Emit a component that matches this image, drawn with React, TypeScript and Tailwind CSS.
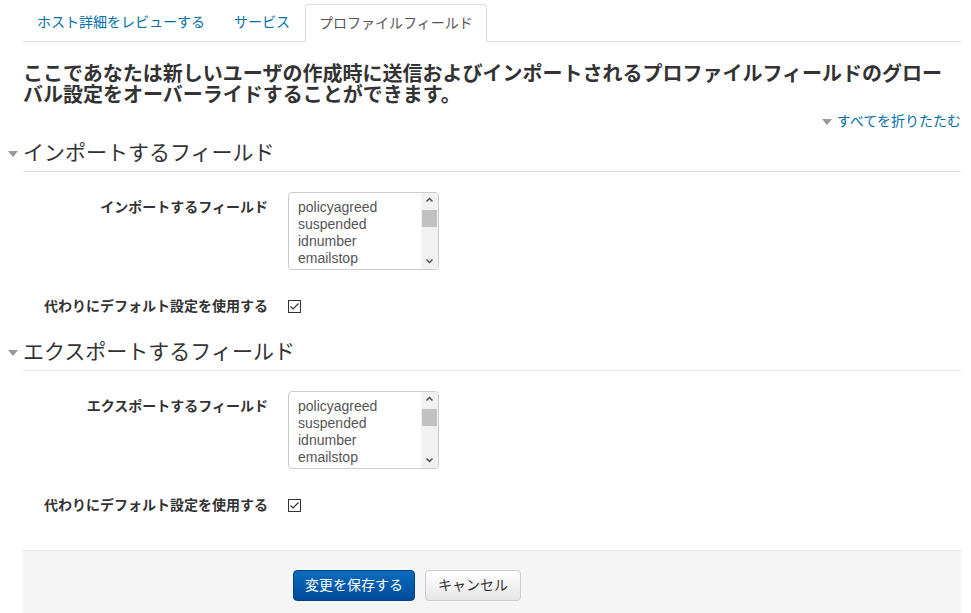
import React from 'react';

const JP = "font-['Liberation_Sans','Noto_Sans_CJK_JP',sans-serif]";

const options = ['policyagreed', 'suspended', 'idnumber', 'emailstop'];

function Triangle({ className = '' }: { className?: string }) {
  return (
    <svg width="10" height="6" viewBox="0 0 10 6" className={className}>
      <path d="M0 0 H10 L5 6 Z" fill="#999" />
    </svg>
  );
}

function FieldSelect() {
  return (
    <div className="w-[151px] h-[78px] border border-[#ccc] rounded-[4px] bg-white flex overflow-hidden">
      <ul className="flex-1 pt-[6px] pl-[9px] text-[14px] leading-[17px] text-[#555] font-['Liberation_Sans',sans-serif]">
        {options.map((o) => (
          <li key={o}>{o}</li>
        ))}
      </ul>
      <div className="w-[17px] bg-[#f1f1f1] flex flex-col items-center">
        <svg width="9" height="17" viewBox="0 0 9 17">
          <path d="M1.5 8.5 L4.5 5.5 L7.5 8.5" stroke="#505050" strokeWidth="1.5" fill="none" />
        </svg>
        <div className="w-[15px] h-[17px] bg-[#c1c1c1]" />
        <div className="flex-1" />
        <svg width="9" height="17" viewBox="0 0 9 17">
          <path d="M1.5 7.5 L4.5 10.5 L7.5 7.5" stroke="#505050" strokeWidth="1.5" fill="none" />
        </svg>
      </div>
    </div>
  );
}

function Checkbox() {
  return (
    <svg width="13" height="13" viewBox="0 0 13 13">
      <rect x="0.5" y="0.5" width="12" height="12" fill="white" stroke="#333" />
      <path d="M2.5 6.5 L5 9 L10.5 3.5" stroke="#333" strokeWidth="1.2" fill="none" />
    </svg>
  );
}

function Section({ title, label, first }: { title: string; label: string; first?: boolean }) {
  return (
    <section className={first ? 'mt-[9px]' : 'mt-[23px]'}>
      <div className="flex items-center border-b border-[#e5e5e5] pb-[5px]">
        <Triangle className="-ml-[15px] mr-[5px] mt-[1px]" />
        <h2 className="text-[21px] leading-[26px] text-[#333] font-normal">{title}</h2>
      </div>
      <div className="mt-[20px] grid grid-cols-[245px_1fr] gap-x-[20px]">
        <div className="text-right text-[14px] leading-[20px] font-bold text-[#333] pt-[5px]">{label}</div>
        <FieldSelect />
      </div>
      <div className="mt-[26px] grid grid-cols-[245px_1fr] gap-x-[20px] items-center h-[20px]">
        <div className="text-right text-[14px] leading-[20px] font-bold text-[#333]">代わりにデフォルト設定を使用する</div>
        <div className="flex items-center">
          <Checkbox />
        </div>
      </div>
    </section>
  );
}

export default function App() {
  const tabs = ['ホスト詳細をレビューする', 'サービス', 'プロファイルフィールド'];
  return (
    <div className={`${JP} bg-white w-[971px] h-[613px] overflow-hidden pl-[23px] pr-[10px] pt-[4px]`}>
      {/* Tabs */}
      <div className="flex border-b border-[#ddd] h-[38px]">
        {tabs.map((t, i) =>
          i === 2 ? (
            <div
              key={t}
              className="h-[38px] px-[13px] flex items-center border border-[#ddd] border-b-white rounded-t-[4px] bg-white text-[14px] text-[#555]"
            >
              {t}
            </div>
          ) : (
            <div key={t} className="h-[37px] px-[14px] mr-[1px] flex items-center text-[14px] text-[#0070a8]">
              {t}
            </div>
          )
        )}
      </div>

      {/* Intro */}
      <h1 className="mt-[22px] text-[20px] leading-[21px] font-bold text-[#333]">
        ここであなたは新しいユーザの作成時に送信およびインポートされるプロファイルフィールドのグローバル設定をオーバーライドすることができます。
      </h1>

      <div className="mt-[5px] flex justify-end items-center gap-[5px] text-[14px] leading-[20px] text-[#0070a8]">
        <Triangle className="mt-[1px]" />
        <span>すべてを折りたたむ</span>
      </div>

      <Section first title="インポートするフィールド" label="インポートするフィールド" />
      <Section title="エクスポートするフィールド" label="エクスポートするフィールド" />

      {/* Footer */}
      <div className="mt-[35px] border-t border-[#e5e5e5] bg-[#f5f5f5] h-[70px] pt-[19px] pl-[270px] flex items-start gap-[10px]">
        <button className="h-[31px] px-[11px] rounded-[4px] border border-[#04408c] bg-gradient-to-b from-[#0a6cbd] to-[#004a9a] text-white text-[14px]">
          変更を保存する
        </button>
        <button className="h-[31px] px-[12px] rounded-[4px] border border-[#ccc] bg-gradient-to-b from-white to-[#e6e6e6] text-[#333] text-[14px]">
          キャンセル
        </button>
      </div>
    </div>
  );
}
